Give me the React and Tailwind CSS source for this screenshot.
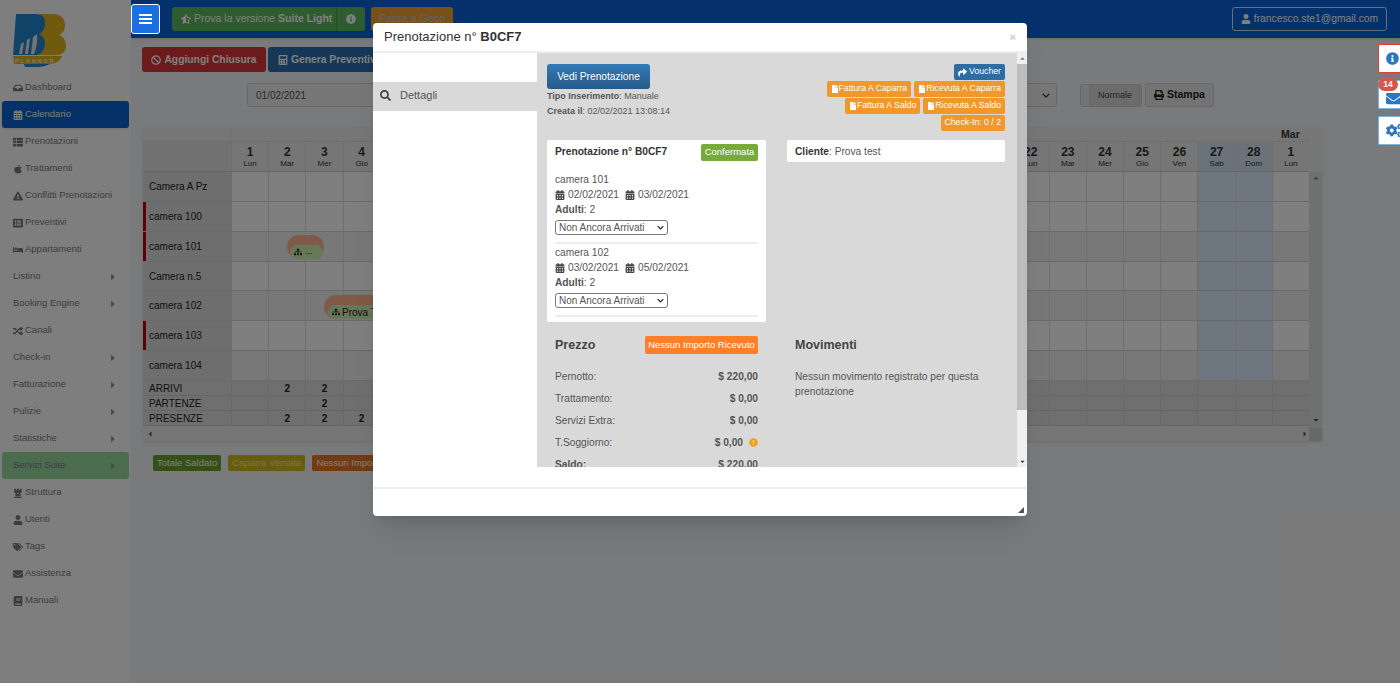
import {
  FaInbox, FaCalendarAlt, FaThList, FaApple, FaExclamationTriangle, FaListAlt, FaBed, FaRandom,
  FaChessRook, FaUser, FaTags, FaEnvelope, FaBook, FaStarHalfAlt, FaInfoCircle, FaBan, FaSearch,
  FaPrint, FaShare, FaFile, FaCogs, FaSitemap, FaExclamationCircle, FaCaretRight, FaCalculator,
  FaCaretUp, FaCaretDown, FaCaretLeft,
} from 'react-icons/fa';

const menu = [
  { label: 'Dashboard', icon: FaInbox },
  { label: 'Calendario', icon: FaCalendarAlt, active: true },
  { label: 'Prenotazioni', icon: FaThList },
  { label: 'Trattamenti', icon: FaApple },
  { label: 'Conflitti Prenotazioni', icon: FaExclamationTriangle },
  { label: 'Preventivi', icon: FaListAlt },
  { label: 'Appartamenti', icon: FaBed },
  { label: 'Listino', arrow: true },
  { label: 'Booking Engine', arrow: true },
  { label: 'Canali', icon: FaRandom },
  { label: 'Check-in', arrow: true },
  { label: 'Fatturazione', arrow: true },
  { label: 'Pulizie', arrow: true },
  { label: 'Statistiche', arrow: true },
  { label: 'Servizi Suite', arrow: true, suite: true },
  { label: 'Struttura', icon: FaChessRook },
  { label: 'Utenti', icon: FaUser },
  { label: 'Tags', icon: FaTags },
  { label: 'Assistenza', icon: FaEnvelope },
  { label: 'Manuali', icon: FaBook },
];

const weekdays = ['Lun', 'Mar', 'Mer', 'Gio', 'Ven', 'Sab', 'Dom'];
const days = [];
for (let i = 0; i < 29; i++) {
  days.push({ num: i < 28 ? i + 1 : 1, name: weekdays[i % 7], weekend: i % 7 >= 5 && i < 28 });
}

const rooms = [
  { name: 'Camera A Pz', h: 'h-[30px]', light: true },
  { name: 'camera 100', h: 'h-[30px]', light: true, mark: true },
  { name: 'camera 101', h: 'h-[30px]', mark: true },
  { name: 'Camera n.5', h: 'h-[29px]', light: true },
  { name: 'camera 102', h: 'h-[30px]' },
  { name: 'camera 103', h: 'h-[30px]', light: true, mark: true },
  { name: 'camera 104', h: 'h-[30px]' },
];

const totals = [
  { name: 'ARRIVI', values: { 1: 2, 2: 2 } },
  { name: 'PARTENZE', values: { 2: 2 } },
  { name: 'PRESENZE', values: { 1: 2, 2: 2, 3: 2 } },
];

function Logo() {
  return (
    <svg viewBox="0 0 54 56" className="w-[54px] h-[56px]">
      <path d="M28 1h12c9 0 13 4 13 11 0 5-2 8-6 10 5 2 7 6 7 11 0 6-4 9-10 9H24z" fill="#e0b41c" />
      <path d="M4 1h20c7 0 9 4 9 9 0 5-2 9-6 11 4 2 6 5 6 9 0 6-4 12-9 12H1z" fill="#1f86d0" />
      <path d="M7 41l2-10 3-2-2 12zM13 41l2-14 3-2-2 16zM19 41l2-17 4-3c1 8-1 15-3 20z" fill="#e8e8e8" />
      <path d="M1 43h49c-2 5-6 8-14 8H2z" fill="#e0b41c" />
      <path d="M12 51h26c-4 2-8 3-12 3H13z" fill="#1f86d0" />
      <text x="3" y="49.5" fontSize="5.5" letterSpacing="2" fill="#f4f4f4" fontWeight="700">PLANNER</text>
    </svg>
  );
}

function Sidebar() {
  return (
    <aside className="w-[131px] shrink-0 bg-[#fdfdfd] text-[#77787a] text-[9.5px] px-[2px] h-full">
      <div className="h-[74px] pt-[13px] pl-[10px]">
        <Logo />
      </div>
      {menu.map((item) => {
        const Icon = item.icon;
        return (
          <div
            key={item.label}
            className={`h-[27px] flex items-center pl-[11px] pr-[11px] rounded-[3px] ${item.active ? 'bg-[#0a60d0] text-[#f4f4f4] shadow-sm' : ''} ${item.suite ? 'bg-[#98d8a0]' : ''}`}
          >
            {Icon && <Icon className="text-[10px] mr-[2px] shrink-0" />}
            <span className="flex-1 truncate">{item.label}</span>
            {item.arrow && <FaCaretRight className="text-[10px] text-[#8a8a8a]" />}
          </div>
        );
      })}
    </aside>
  );
}

function Header() {
  return (
    <header className="h-[38px] bg-[#0862d8] flex items-center shadow-sm">
      <button className="relative z-50 w-[29px] h-[30px] bg-[#1a6fe3] border border-white rounded-[3px] flex flex-col items-center justify-center gap-[2px]">
        <span className="block w-[13px] h-[2px] bg-white" />
        <span className="block w-[13px] h-[2px] bg-white" />
        <span className="block w-[13px] h-[2px] bg-white" />
      </button>
      <div className="ml-[12px] flex h-[24px] w-[193px] rounded-[3px] bg-[#5cb85c] text-white text-[10.5px]">
        <div className="flex-1 flex items-center pl-[9px] gap-[3px] border-r border-[#4a9a4a]">
          <FaStarHalfAlt className="text-[10px]" />
          <span>Prova la versione <b>Suite Light</b></span>
        </div>
        <div className="w-[28px] flex items-center justify-center">
          <FaInfoCircle className="text-[10px]" />
        </div>
      </div>
      <div className="ml-[6px] h-[24px] w-[82px] rounded-[3px] bg-[#f0a030] text-[#c9c9c9] text-[10.5px] flex items-center justify-center">
        Passa a Geco
      </div>
      <div className="ml-auto mr-[13px] h-[24px] w-[155px] border border-[#cfe0f5] rounded-[3px] text-white text-[10.3px] flex items-center justify-center gap-[3px]">
        <FaUser className="text-[10px]" />
        francesco.ste1@gmail.com
      </div>
    </header>
  );
}

function Toolbar() {
  return (
    <div className="relative">
      <div className="flex gap-[2px] pl-[11px] pt-[9px] h-[45px]">
        <div className="h-[25px] w-[124px] bg-[#d9363a] rounded-[3px] text-white font-bold text-[10.3px] flex items-center justify-center gap-[3px]">
          <FaBan className="text-[10px]" /> Aggiungi Chiusura
        </div>
        <div className="h-[25px] w-[124px] bg-[#2c6fae] rounded-[3px] text-white font-bold text-[10.3px] flex items-center pl-[10px] gap-[3px]">
          <FaCalculator className="text-[10px]" /> Genera Preventivo
        </div>
      </div>
      <div className="flex items-center h-[24px] pl-[116px]">
        <div className="h-[24px] w-[180px] bg-[#eeeeee] border border-[#cccccc] rounded-[3px] text-[#555] text-[10px] flex items-center pl-[8px]">
          01/02/2021
        </div>
        <div className="ml-auto h-[24px] w-[100px] bg-[#eeeeee] border border-[#cccccc] rounded-[3px] flex items-center justify-end pr-[6px] mr-[23px]">
          <svg viewBox="0 0 10 6" className="w-[8px] h-[5px]"><path d="M1 1l4 4 4-4" fill="none" stroke="#333" strokeWidth="1.6" /></svg>
        </div>
        <div className="h-[23px] w-[62px] bg-[#d8d8d8] border border-[#cfcfcf] rounded-[3px] flex text-[9px] text-[#444]">
          <span className="w-[8px] bg-[#e8e8e8] rounded-l-[3px]" />
          <span className="flex-1 flex items-center justify-center pt-[1px]">Normale</span>
        </div>
        <div className="ml-[3px] mr-[186px] h-[24px] w-[69px] bg-[#e6e6e6] border border-[#cccccc] rounded-[3px] text-[#222] font-bold text-[10.5px] flex items-center justify-center gap-[3px]">
          <FaPrint className="text-[10px]" /> Stampa
        </div>
      </div>
    </div>
  );
}

function Calendar() {
  return (
    <div className="relative ml-[12px] mt-[20px] w-[1179px] bg-[#eeeeee] flex shadow-sm">
      <div className="w-[1166px]">
        <div className="h-[15px] flex bg-[#ececec] border-b border-[#dddddd]">
          <div className="w-[88px] border-r border-[#dddddd]" />
          <div className="flex-1" />
          <div className="w-[37.18px] text-center font-bold text-[10.5px] text-[#333]">Mar</div>
        </div>
        <div className="h-[30px] flex border-b border-[#cccccc]">
          <div className="w-[88px] bg-[#e4e4e4]" />
          {days.map((d, i) => (
            <div
              key={i}
              className={`w-[37.18px] border-l border-[#dddddd] flex flex-col items-center justify-center ${d.weekend ? 'bg-[#d4e4f4]' : 'bg-[#ececec]'}`}
            >
              <span className="text-[12px] leading-[13px] font-bold text-[#333]">{d.num}</span>
              <span className="text-[8px] leading-[9px] text-[#333]">{d.name}</span>
            </div>
          ))}
        </div>
        {rooms.map((r) => (
          <div key={r.name} className={`${r.h} flex border-b border-[#d4d4d4]`}>
            <div className={`w-[88px] bg-[#dcdcdc] text-[10px] text-[#222] flex items-center ${r.mark ? 'border-l-[3px] border-[#c00000] pl-[3px]' : 'pl-[6px]'}`}>
              {r.name}
            </div>
            {days.map((d, i) => (
              <div
                key={i}
                className={`w-[37.18px] border-l border-[#dddddd] ${d.weekend ? 'bg-[#dcecff]' : r.light ? 'bg-white' : 'bg-[#f0f0f0]'}`}
              />
            ))}
          </div>
        ))}
        {totals.map((t) => (
          <div key={t.name} className="h-[15px] flex bg-[#dedede] border-b border-[#cccccc] text-[10px] text-[#222]">
            <div className="w-[88px] pl-[6px] leading-[15px]">{t.name}</div>
            {days.map((d, i) => (
              <div key={i} className="w-[37.18px] border-l border-[#d4d4d4] text-center font-bold leading-[16px]">
                {t.values[i]}
              </div>
            ))}
          </div>
        ))}
        <div className="h-[15px] bg-[#ececec] flex items-center pl-[3px]">
          <FaCaretLeft className="text-[8px] text-[#555]" />
        </div>
      </div>
      <div className="w-[13px] flex flex-col items-center bg-[#e0e0e0]">
        <div className="h-[45px] w-full bg-[#eeeeee]" />
        <FaCaretUp className="text-[8px] text-[#777] mt-[2px]" />
        <div className="flex-1" />
        <FaCaretDown className="text-[8px] text-[#555] mb-[17px]" />
      </div>
      <div className="absolute right-[13px] bottom-[3px]">
        <FaCaretRight className="text-[8px] text-[#555]" />
      </div>
      <div className="absolute right-0 bottom-0 w-[13px] h-[13px] bg-[#d0d0d0]" />
      <div className="absolute left-[144px] top-[108px] w-[37px] h-[24px] rounded-[12px] bg-[#ffb591]">
        <div className="absolute left-[3px] bottom-[0px] w-[33px] h-[14px] rounded-[8px] bg-[#cfeeb0] flex items-center pl-[4px] gap-[3px] text-[9px] text-[#222]">
          <FaSitemap className="text-[8px]" /> ...
        </div>
      </div>
      <div className="absolute left-[181px] top-[168px] w-[120px] h-[24px] rounded-[12px] bg-[#ffb591]">
        <div className="absolute left-[4px] bottom-[0px] w-[110px] h-[14px] rounded-[8px] bg-[#cfeeb0] flex items-center pl-[4px] gap-[2px] text-[10px] text-[#222]">
          <FaSitemap className="text-[8px]" /> Prova Test
        </div>
      </div>
    </div>
  );
}

function Legend() {
  return (
    <div className="ml-[22px] mt-[14px] flex gap-[7px] text-[9.5px] text-white h-[16px]">
      <span className="px-[4px] bg-[#68a028] rounded-[2px] flex items-center">Totale Saldato</span>
      <span className="px-[4px] bg-[#d0b81c] rounded-[2px] flex items-center text-[#f4e9a8]">Caparra Versata</span>
      <span className="px-[4px] w-[110px] bg-[#e87420] rounded-[2px] flex items-center">Nessun Importo</span>
    </div>
  );
}

function OrangeBtn({ children }) {
  return (
    <span className="h-[16px] px-[4px] bg-[#f0982a] rounded-[2px] text-white text-[8.7px] flex items-center">
      {children}
    </span>
  );
}

function RoomBlock({ name, from, to }) {
  return (
    <div className="mb-[2px] border-b-2 border-[#eeeeee] pb-[7px]">
      <div className="leading-[14px]">{name}</div>
      <div className="leading-[15px] flex items-center gap-[3px]">
        <FaCalendarAlt className="text-[10px] text-[#444]" /> {from}
        <FaCalendarAlt className="text-[10px] text-[#444] ml-[3px]" /> {to}
      </div>
      <div className="leading-[15px]"><b>Adulti</b>: 2</div>
      <div className="mt-[3px] h-[15px] w-[113px] border border-[#767676] rounded-[3px] flex items-center justify-between pl-[3px] pr-[3px] text-[10px] leading-none">
        Non Ancora Arrivati
        <svg viewBox="0 0 10 6" className="w-[7px] h-[5px]"><path d="M1 1l4 4 4-4" fill="none" stroke="#222" strokeWidth="1.8" /></svg>
      </div>
    </div>
  );
}

function PriceRow({ label, value, warn, bold }) {
  return (
    <div className="h-[22px] flex items-center justify-between">
      <span className={bold ? 'font-bold' : ''}>{label}</span>
      <span className="font-bold flex items-center gap-[6px]">
        {value}
        {warn && <FaExclamationCircle className="text-[9px] text-[#f0a010]" />}
      </span>
    </div>
  );
}

function ReservationModal() {
  return (
    <div className="absolute z-50 left-[373px] top-[23px] w-[654px] h-[493px] bg-white rounded-[4px] shadow-xl flex flex-col overflow-hidden text-[#555]">
      <div className="h-[30px] shrink-0 border-b-2 border-[#eeeeee] flex items-center pl-[11px] pr-[11px] text-[13px] text-[#333]">
        <span>Prenotazione n° <b>B0CF7</b></span>
        <span className="ml-auto text-[11px] text-[#c8c8c8] font-bold">×</span>
      </div>
      <div className="h-[414px] shrink-0 flex">
        <div className="w-[164px] shrink-0 pt-[29px]">
          <div className="h-[29px] bg-[#d9d9d9] flex items-center pl-[7px] pb-[2px] gap-[9px] text-[11px] text-[#555]">
            <FaSearch className="text-[11px] text-[#444]" /> Dettagli
          </div>
        </div>
        <div className="w-[480px] bg-[#d9d9d9] overflow-hidden pl-[10px] pr-[12px] pt-[11px] text-[10.2px]">
          <div className="flex justify-between h-[76px]">
            <div>
              <div className="w-[103px] h-[25px] rounded-[3px] bg-gradient-to-b from-[#337ab7] to-[#265a88] text-white text-[10.2px] flex items-center justify-center">
                Vedi Prenotazione
              </div>
              <div className="text-[9px] leading-[15px]"><b>Tipo Inserimento</b>: Manuale</div>
              <div className="text-[9px] leading-[15px]"><b>Creata il</b>: 02/02/2021 13:08:14</div>
            </div>
            <div className="flex flex-col items-end gap-[1px]">
              <span className="h-[16px] px-[4px] bg-[#2c6da6] rounded-[2px] text-white text-[8.7px] flex items-center gap-[2px]">
                <FaShare className="text-[9px]" /> Voucher
              </span>
              <div className="flex gap-[3px]">
                <OrangeBtn><FaFile className="text-[8px]" />Fattura A Caparra</OrangeBtn>
                <OrangeBtn><FaFile className="text-[8px]" />Ricevuta A Caparra</OrangeBtn>
              </div>
              <div className="flex gap-[3px]">
                <OrangeBtn><FaFile className="text-[8px]" />Fattura A Saldo</OrangeBtn>
                <OrangeBtn><FaFile className="text-[8px]" />Ricevuta A Saldo</OrangeBtn>
              </div>
              <OrangeBtn>Check-In: 0 / 2</OrangeBtn>
            </div>
          </div>
          <div className="flex gap-[21px] items-start">
            <div className="w-[219px]">
              <div className="bg-white rounded-[2px] px-[8px] pt-[4px] h-[182px] overflow-hidden">
                <div className="flex justify-between items-start h-[29px]">
                  <b className="text-[#333]">Prenotazione n° B0CF7</b>
                  <span className="h-[17px] w-[57px] rounded-[2px] bg-[#76ab3a] text-white text-[9.5px] flex items-center justify-center">Confermata</span>
                </div>
                <RoomBlock name="camera 101" from="02/02/2021" to="03/02/2021" />
                <RoomBlock name="camera 102" from="03/02/2021" to="05/02/2021" />
              </div>
              <div className="px-[8px]">
                <div className="flex justify-between items-center mt-[14px] mb-[12px] h-[18px]">
                  <b className="text-[12.5px] text-[#444]">Prezzo</b>
                  <span className="h-[18px] w-[113px] rounded-[2px] bg-[#ff7f27] text-white text-[9.5px] flex items-center justify-center">Nessun Importo Ricevuto</span>
                </div>
                <PriceRow label="Pernotto:" value="$ 220,00" />
                <PriceRow label="Trattamento:" value="$ 0,00" />
                <PriceRow label="Servizi Extra:" value="$ 0,00" />
                <PriceRow label="T.Soggiorno:" value="$ 0,00" warn />
                <PriceRow label="Saldo:" value="$ 220,00" bold />
              </div>
            </div>
            <div className="w-[218px]">
              <div className="bg-white rounded-[2px] h-[22px] flex items-center px-[8px] pt-[1px]">
                <span><b className="text-[#333]">Cliente</b>: Prova test</span>
              </div>
              <div className="px-[8px] mt-[174px]">
                <b className="block text-[12.5px] text-[#444] h-[18px] leading-[18px]">Movimenti</b>
                <p className="mt-[15px] leading-[15px]">Nessun movimento registrato per questa prenotazione</p>
              </div>
            </div>
          </div>
        </div>
        <div className="w-[10px] bg-[#f0f0f0] flex flex-col items-center">
          <FaCaretUp className="text-[7px] text-[#777] my-[2px]" />
          <div className="w-full h-[346px] bg-[#bdbdbd]" />
          <div className="flex-1" />
          <FaCaretDown className="text-[7px] text-[#333] my-[2px]" />
        </div>
      </div>
      <div className="h-[22px] shrink-0 border-b-2 border-[#eeeeee]" />
      <div className="flex-1 relative">
        <svg viewBox="0 0 8 8" className="absolute right-[3px] bottom-[3px] w-[6px] h-[6px]">
          <path d="M8 0v8H0z" fill="#555" />
        </svg>
      </div>
    </div>
  );
}

function SideTabs() {
  return (
    <div className="absolute z-50 right-0 top-[44px] flex flex-col gap-[7px]">
      <div className="w-[22px] h-[29px] bg-white border border-[#e53935] border-r-0 rounded-l-[2px] flex items-center pl-[7px] overflow-hidden">
        <FaInfoCircle className="text-[13px] text-[#2b77c4] shrink-0" />
      </div>
      <div className="relative w-[22px] h-[29px] bg-white border border-[#7ab8d8] border-r-0 rounded-l-[2px]">
        <div className="absolute inset-0 flex items-center pl-[7px] pt-[7px] overflow-hidden">
          <FaEnvelope className="text-[15px] text-[#2b77c4] shrink-0" />
        </div>
        <span className="absolute -left-[1px] -top-[3px] w-[20px] h-[13px] rounded-[7px] bg-[#d9534f] text-white text-[8.5px] font-bold flex items-center justify-center">14</span>
      </div>
      <div className="w-[22px] h-[29px] bg-white border border-[#7ab8d8] border-r-0 rounded-l-[2px] flex items-center pl-[7px] overflow-hidden">
        <FaCogs className="text-[17px] text-[#2b77c4] shrink-0" />
      </div>
    </div>
  );
}

export default function App() {
  return (
    <div className="relative w-[1400px] h-[683px] overflow-hidden bg-[#f3f4f6] flex font-['Liberation_Sans',sans-serif]">
      <Sidebar />
      <main className="flex-1 min-w-0">
        <Header />
        <Toolbar />
        <Calendar />
        <Legend />
      </main>
      <div className="absolute inset-0 z-40 bg-black/50" />
      <ReservationModal />
      <SideTabs />
    </div>
  );
}
